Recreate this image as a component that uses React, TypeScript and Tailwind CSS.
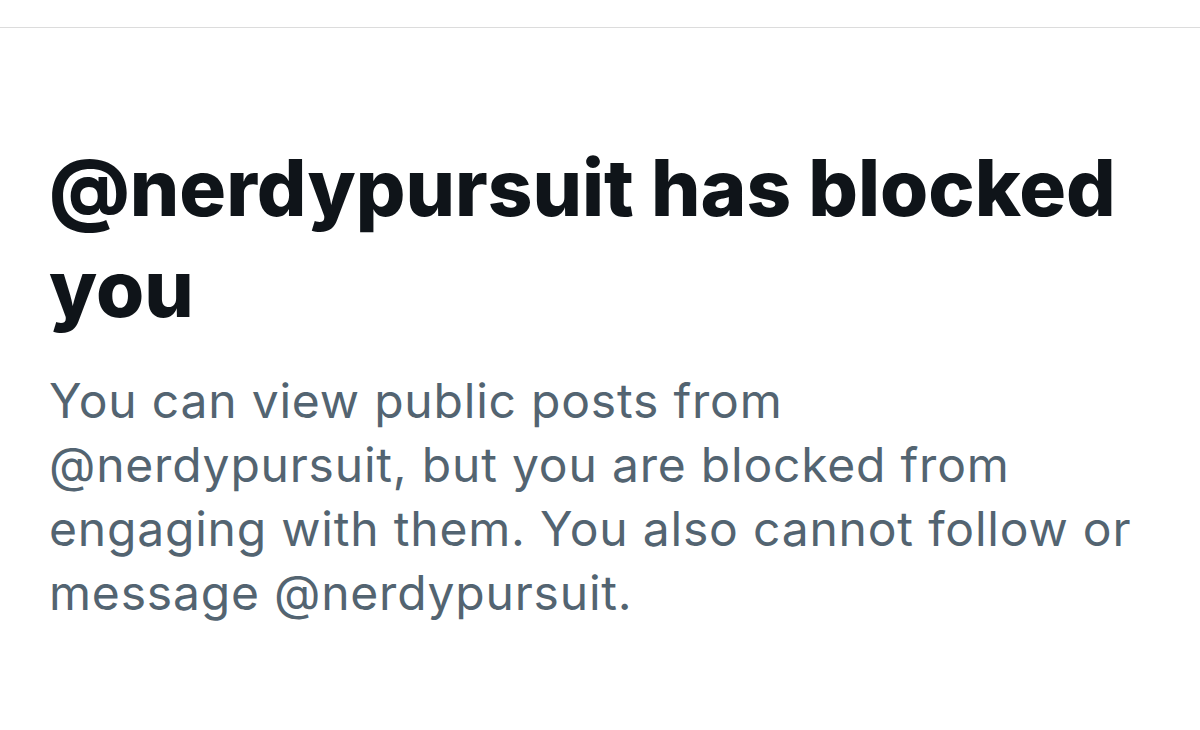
import React from "react";

export default function App() {
  return (
    <div className="w-[1200px] h-[730px] bg-white overflow-hidden" style={{ fontFamily: "Inter, 'Liberation Sans', sans-serif" }}>
      <div className="h-[28px] border-b border-[#dcdcdc]" />
      <div className="pl-[49px] pr-[40px] pt-[109px]">
        <h1 className="text-[78px] leading-[101px] font-extrabold text-[#0f1419] tracking-[0px]">
          @nerdypursuit has blocked you
        </h1>
        <p className="mt-[30px] text-[48px] leading-[64px] text-[#536471] tracking-[0.8px]">
          <span className="block">You can view public posts from</span>
          <span className="block">@nerdypursuit, but you are blocked from</span>
          <span className="block">engaging with them. You also cannot follow or</span>
          <span className="block">message @nerdypursuit.</span>
        </p>
      </div>
    </div>
  );
}
